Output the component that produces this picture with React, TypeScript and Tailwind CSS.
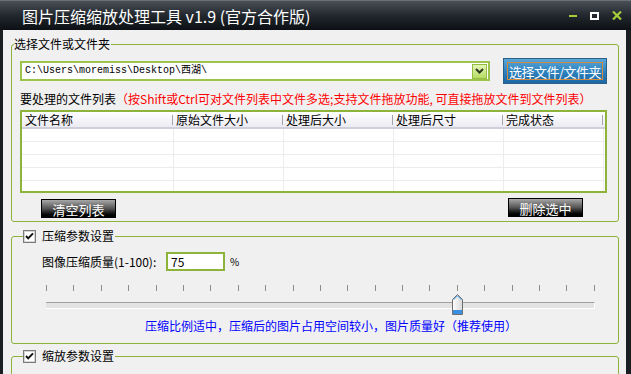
import React from "react";

const COLS = [
  { title: "文件名称", w: "w-[152px]", pl: "pl-[3px]" },
  { title: "原始文件大小", w: "w-[110px]", pl: "pl-[2px]" },
  { title: "处理后大小", w: "w-[110px]", pl: "pl-[2px]" },
  { title: "处理后尺寸", w: "w-[110px]", pl: "pl-[2px]" },
  { title: "完成状态", w: "w-[100px]", pl: "pl-[2px]" },
];

function CheckBox() {
  return (
    <svg width="13" height="13" viewBox="0 0 13 13" className="shrink-0">
      <rect x="0.5" y="0.5" width="12" height="12" fill="#fff" stroke="#7b7b7b" />
      <rect x="1.5" y="1.5" width="10" height="10" fill="none" stroke="#d4d4d4" />
      <path d="M3 6 L5.2 8.4 L10 3.4" stroke="#111" strokeWidth="2" fill="none" />
    </svg>
  );
}

function Thumb() {
  return (
    <svg width="11" height="21" viewBox="0 0 11 21">
      <defs>
        <linearGradient id="tg" x1="0" y1="0" x2="1" y2="0">
          <stop offset="0" stopColor="#ffffff" />
          <stop offset="1" stopColor="#d8d8d8" />
        </linearGradient>
      </defs>
      <path d="M0.5 5.5 L5.5 0.5 L10.5 5.5 V20.5 H0.5 Z" fill="url(#tg)" stroke="#6f6f6f" />
      <path d="M1.5 5.8 L5.5 1.8 L9.5 5.8" fill="none" stroke="#3d94e6" />
      <rect x="1" y="16" width="9" height="4" fill="#3b8fe0" />
    </svg>
  );
}

function BlackButton({ label, className }: { label: string; className?: string }) {
  return (
    <div
      className={`w-[75px] h-[19px] border border-black bg-gradient-to-b from-[#a8a8a8] via-[#555] via-50% to-black flex items-center justify-center text-white text-[13px] leading-none ${className ?? ""}`}
    >
      <span className="mt-[1px]">{label}</span>
    </div>
  );
}

export default function App() {
  const quality = 75;
  const thumbLeft = Math.round((quality / 100) * 548) - 5;

  return (
    <div className="w-[631px] h-[374px] overflow-hidden flex flex-col bg-[#14181c] font-['Noto_Sans_CJK_SC','Noto_Sans',sans-serif] text-[12px] text-black">
      {/* title bar */}
      <div className="h-[30px] shrink-0 flex items-center bg-gradient-to-b from-[#4a5057] via-[#22282e] to-[#0c1014] border-t border-[#6a7076]">
        <span className="pl-[22px] text-white text-[16px] leading-none">图片压缩缩放处理工具 v1.9 (官方合作版)</span>
        <div className="ml-auto flex items-center">
          <div className="w-[8px] h-[2px] bg-[#a6cc3c] mt-[1px]" />
          <div className="w-[9px] h-[8px] border-2 border-white ml-[13px]" />
          <svg width="10" height="9" viewBox="0 0 10 9" className="ml-[13px] mr-[9px]">
            <path d="M1 0.5 L9 8.5 M9 0.5 L1 8.5" stroke="#a6cc3c" strokeWidth="2.2" />
          </svg>
        </div>
      </div>

      <div className="flex flex-1 min-h-0">
        <div className="w-[3px] shrink-0 bg-[#1a1e22]" />
        <div className="flex-1 bg-[#f0f0f0] flex flex-col min-w-0">
          {/* group 1 */}
          <fieldset className="ml-[8px] mr-[7px] mt-[6px] border border-[#8db33a] rounded-[3px]">
            <legend className="ml-[2px] pr-[1px] leading-[16px]">选择文件或文件夹</legend>
            <div className="pl-[8px] pb-[3px] flex flex-col">
              <div className="mt-[6px] h-[26px] flex items-center">
                <div className="w-[470px] h-[20px] border-2 border-[#9cc44a] bg-white flex items-center">
                  <span className="pl-[3px] font-['Liberation_Mono','Noto_Sans_CJK_SC',monospace] text-[10px] leading-none">
                    {"C:\\Users\\moremiss\\Desktop\\西湖\\"}
                  </span>
                  <div className="ml-auto mr-[1px] w-[15px] h-[15px] border border-[#93bd3f] bg-gradient-to-b from-[#e4f5b4] to-[#b6dc62] flex items-center justify-center">
                    <svg width="9" height="6" viewBox="0 0 9 6">
                      <path d="M1 1 L4.5 4.5 L8 1" stroke="#2e3a20" strokeWidth="2" fill="none" />
                    </svg>
                  </div>
                </div>
                <div className="ml-[13px] w-[104px] h-[26px] border border-[#2b5f88] bg-gradient-to-b from-[#5aa6d8] via-[#2f84c0] to-[#1a67a3] px-[3px] py-[3px]">
                  <div className="h-full border border-[#d48a3c] flex items-center justify-center text-white text-[13px] tracking-[-0.5px] leading-none whitespace-nowrap">
                    选择文件/文件夹
                  </div>
                </div>
              </div>

              <div className="mt-[8px] h-[14px] flex items-center leading-[14px] whitespace-nowrap">
                <span>要处理的文件列表</span>
                <span className="text-[#ff0000]">（按Shift或Ctrl可对文件列表中文件多选;支持文件拖放功能, 可直接拖放文件到文件列表）</span>
              </div>

              {/* list view */}
              <div className="mt-[4px] w-[587px] h-[83px] border-2 border-[#8db33a] bg-white overflow-hidden">
                <div className="h-[17px] flex bg-gradient-to-b from-white to-[#ebebf2] border-b-2 border-[#cfcfdc]">
                  {COLS.map((c) => (
                    <div key={c.title} className={`${c.w} ${c.pl} shrink-0 flex items-center leading-none relative`}>
                      <span>{c.title}</span>
                      <div className="absolute right-[1px] top-[3px] h-[10px] w-px bg-[#a4a4ae]" />
                    </div>
                  ))}
                </div>
                {[0, 1, 2, 3, 4].map((r) => (
                  <div key={r} className="h-[13px] flex border-b border-[#ececec]">
                    {COLS.map((c) => (
                      <div key={c.title} className={`${c.w} shrink-0 border-r border-[#ececec]`} />
                    ))}
                  </div>
                ))}
              </div>

              <div className="mt-[5px] flex">
                <BlackButton label="清空列表" className="ml-[21px] mt-[1px]" />
                <BlackButton label="删除选中" className="ml-auto mr-[35px]" />
              </div>
            </div>
          </fieldset>

          {/* group 2 */}
          <fieldset className="ml-[8px] mr-[7px] mt-[6px] border border-[#8db33a] rounded-[3px]">
            <legend className="ml-[11px] pr-[1px] leading-[16px]">
              <span className="flex items-center gap-[6px]">
                <CheckBox />
                <span>压缩参数设置</span>
              </span>
            </legend>
            <div className="pb-[10px] flex flex-col">
              <div className="mt-[8px] pl-[30px] flex items-center h-[19px]">
                <span className="w-[124px] leading-none">图像压缩质量(1-100):</span>
                <div className="w-[59px] h-[19px] border-2 border-[#8db33a] bg-white flex items-center pl-[3px] leading-none">
                  75
                </div>
                <span className="ml-[5px] text-[10px] leading-none">%</span>
              </div>

              <div className="mt-[14px] ml-[34px] w-[549px] h-[6px] flex justify-between">
                {Array.from({ length: 21 }).map((_, i) => (
                  <div key={i} className="w-px h-[6px] bg-[#8c8c8c]" />
                ))}
              </div>
              <div className="mt-[11px] ml-[34px] w-[549px] h-[7px] relative bg-[#e3e3e3] border-t border-[#a0a0a0] border-r border-b border-r-white border-b-white">
                <div className="absolute top-[-9px]" style={{ left: thumbLeft }}>
                  <Thumb />
                </div>
              </div>

              <div className="mt-[10px] pl-[133px] h-[14px] leading-[14px] text-[#0000ff] whitespace-nowrap">
                压缩比例适中，压缩后的图片占用空间较小，图片质量好（推荐使用）
              </div>
            </div>
          </fieldset>

          {/* group 3 */}
          <fieldset className="ml-[8px] mr-[7px] mt-[4px] border border-[#8db33a] rounded-[3px] h-[60px] shrink-0">
            <legend className="ml-[11px] pr-[1px] leading-[16px]">
              <span className="flex items-center gap-[6px]">
                <CheckBox />
                <span>缩放参数设置</span>
              </span>
            </legend>
          </fieldset>
        </div>
        <div className="w-[5px] shrink-0 bg-[#1a1e22]" />
      </div>
    </div>
  );
}
